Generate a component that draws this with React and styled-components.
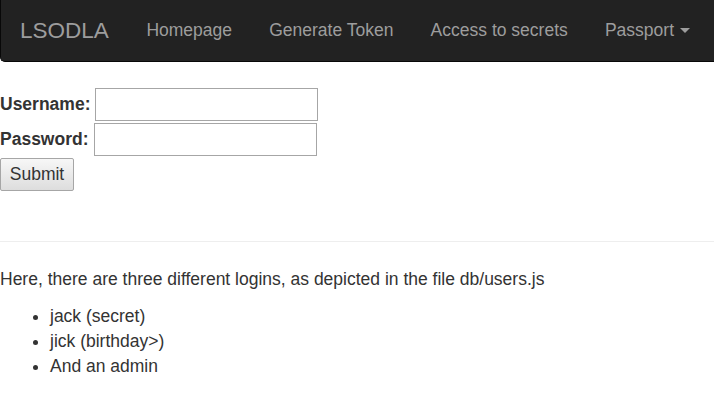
import React from 'react';
import styled, { createGlobalStyle } from 'styled-components';

const GlobalStyle = createGlobalStyle`
	html, body {
		margin: 0;
		padding: 0;
		background: #fff;
	}
	body {
		font-family: "Liberation Sans", Arial, Helvetica, sans-serif;
		font-size: 17.5px;
		line-height: 25px;
		color: #333;
	}
`;

const Navbar = styled.nav`
	height: 62px;
	box-sizing: border-box;
	background: #222;
	border-bottom: 1px solid #080808;
	border-left: 1px solid #080808;
	border-bottom-left-radius: 5px;
	display: flex;
	align-items: center;
	margin-bottom: 25px;
	white-space: nowrap;
	overflow: hidden;
`;

const Brand = styled.a`
	flex-shrink: 0;
	font-size: 22.5px;
	color: #9d9d9d;
	padding: 0 19px;
	text-decoration: none;
`;

const NavLink = styled.a`
	flex-shrink: 0;
	color: #9d9d9d;
	padding: 0 18.6px;
	text-decoration: none;
	display: flex;
	align-items: center;
`;

const Caret = styled.span`
	display: inline-block;
	width: 0;
	height: 0;
	margin-left: 6px;
	border-top: 5px solid #9d9d9d;
	border-left: 5px solid transparent;
	border-right: 5px solid transparent;
`;

const Form = styled.form`
	display: flex;
	flex-direction: column;
	align-items: flex-start;
	gap: 2px;
	padding-top: 1px;
	padding-bottom: 25px;
`;

const Row = styled.div`
	display: flex;
	align-items: center;
	gap: 5px;
`;

const Label = styled.label`
	font-weight: bold;
`;

const Input = styled.input`
	width: 223px;
	height: 33px;
	box-sizing: border-box;
	border: 1px solid #a6a6a6;
	margin: 0;
	font-size: 16px;
`;

const Button = styled.button`
	height: 33px;
	width: 74px;
	box-sizing: border-box;
	margin: 0;
	font-family: inherit;
	font-size: 17.5px;
	color: #333;
	background: linear-gradient(#f7f7f7, #dddddd);
	border: 1px solid #a6a6a6;
	border-radius: 2px;
	padding: 0;
`;

const Rule = styled.hr`
	border: 0;
	border-top: 1px solid #eee;
	margin: 25px 0;
`;

const Text = styled.p`
	margin: 0 0 12px;
`;

const List = styled.ul`
	margin: 0;
	padding-left: 50px;
`;

export default function App() {
	return (
		<>
			<GlobalStyle />
			<Navbar>
				<Brand href="#">LSODLA</Brand>
				<NavLink href="#">Homepage</NavLink>
				<NavLink href="#">Generate Token</NavLink>
				<NavLink href="#">Access to secrets</NavLink>
				<NavLink href="#">
					Passport<Caret />
				</NavLink>
			</Navbar>
			<Form onSubmit={e => e.preventDefault()}>
				<Row>
					<Label>Username:</Label>
					<Input type="text" />
				</Row>
				<Row>
					<Label>Password:</Label>
					<Input type="password" />
				</Row>
				<Button type="submit">Submit</Button>
			</Form>
			<Rule />
			<Text>Here, there are three different logins, as depicted in the file db/users.js</Text>
			<List>
				<li>jack (secret)</li>
				<li>jick (birthday&gt;)</li>
				<li>And an admin</li>
			</List>
		</>
	);
}
